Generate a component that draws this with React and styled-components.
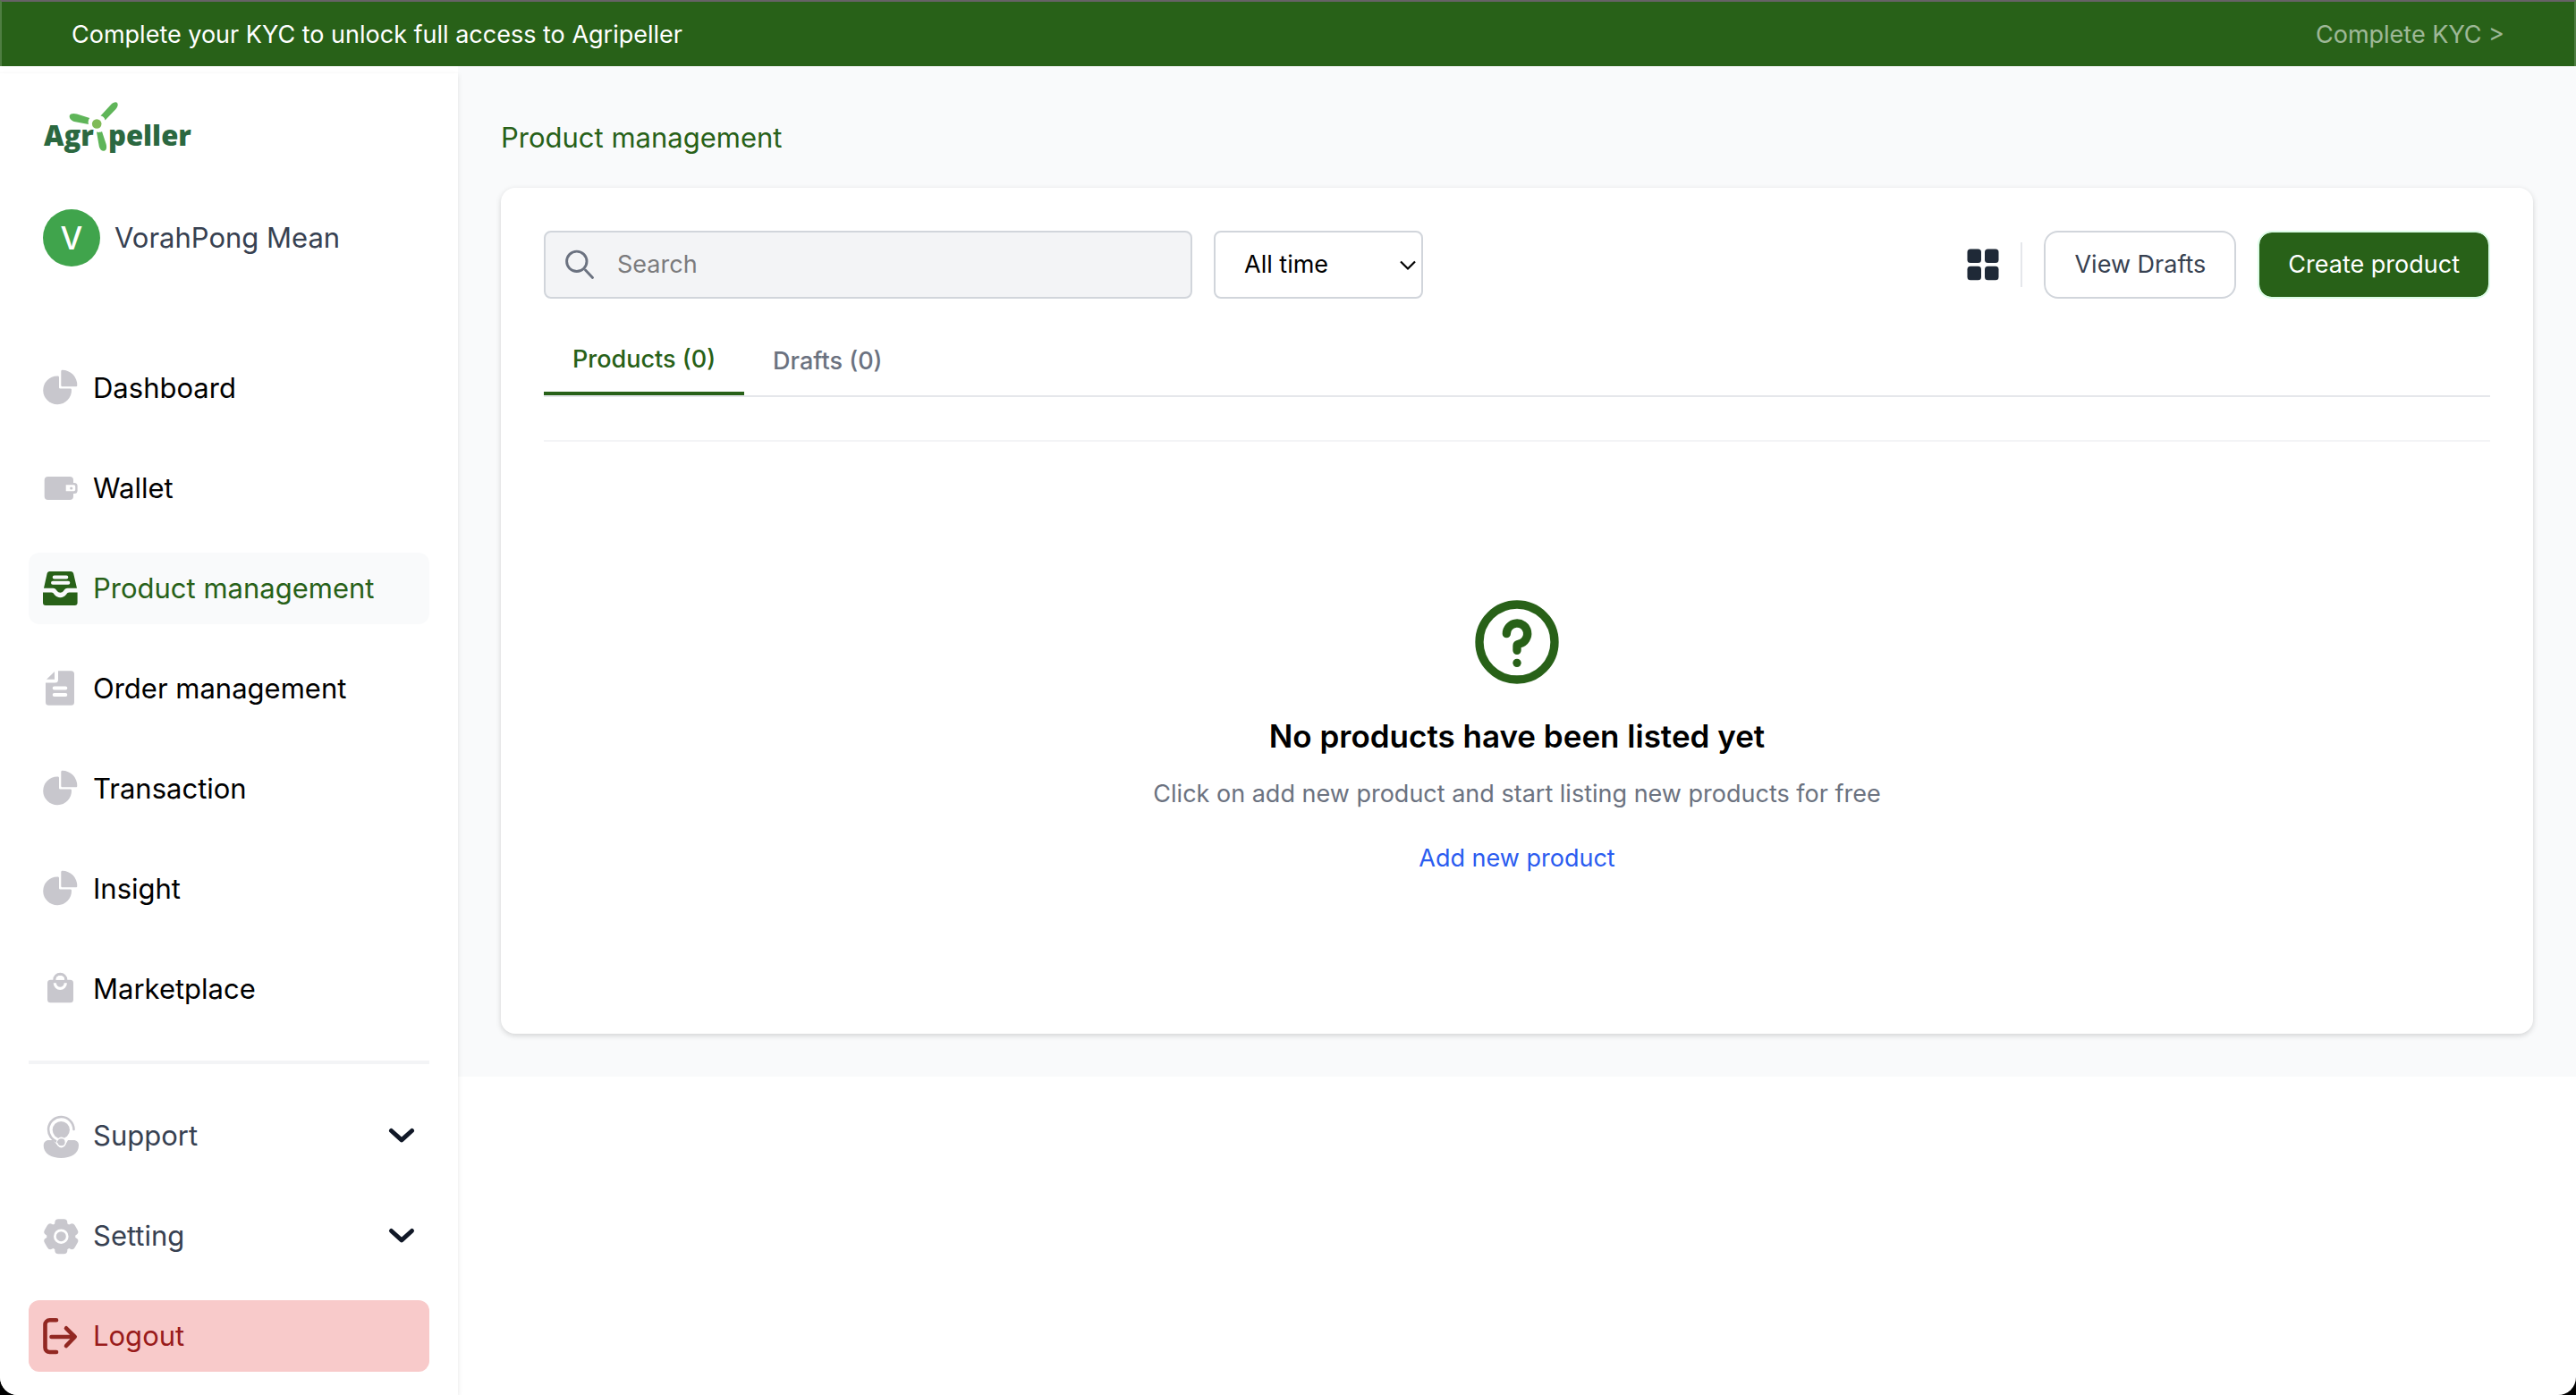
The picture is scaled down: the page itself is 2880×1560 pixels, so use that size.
import React from 'react';
import styled, { createGlobalStyle, css } from 'styled-components';

const GREEN = '#286118';
const MUTED = '#c8c7cd';

const GlobalStyle = createGlobalStyle`
  *, *::before, *::after { box-sizing: border-box; }
  body {
    margin: 0;
    background: #000;
    color: #000;
    font-family: Inter, "Liberation Sans", sans-serif;
    font-size: 27px;
    line-height: 40px;
  }
  h1, h2, p { margin: 0; }
  a { color: inherit; text-decoration: none; }
  button, input, select { font: inherit; color: inherit; margin: 0; }
  button { cursor: pointer; }
  svg { display: block; flex: none; overflow: visible; }
`;

const Shell = styled.div`
  display: flex;
  flex-direction: column;
  min-height: 100vh;
  background: #fff;
  border-radius: 0 0 20px 20px;
  overflow: hidden;
`;

const Banner = styled.header`
  display: flex;
  align-items: center;
  justify-content: space-between;
  padding: 17px 78px 15px;
  color: #fff;
  background: ${GREEN};
  border: 2px solid #4f7e42;
  border-top-color: #666266;
  border-bottom: 0;
`;

const BannerLink = styled.a`
  opacity: 0.55;
`;

const Body = styled.div`
  display: flex;
  flex: 1;
  align-items: stretch;
`;

const Sidebar = styled.aside`
  position: relative;
  z-index: 1;
  display: flex;
  flex: none;
  flex-direction: column;
  width: 512px;
  margin-top: 8px;
  padding: 28px 32px 24px;
  background: #fff;
  box-shadow: 0 2px 6px rgba(0, 0, 0, 0.1);
`;

const LogoLink = styled.a`
  display: block;
  width: 184px;
  margin-left: 16px;
`;

const Profile = styled.div`
  display: flex;
  align-items: center;
  gap: 16px;
  margin-top: 60px;
  padding: 0 16px;
  font-size: 31px;
  color: #374151;
`;

const Avatar = styled.span`
  display: grid;
  place-items: center;
  width: 64px;
  height: 64px;
  border-radius: 50%;
  background: #40a44c;
  color: #fff;
  font-size: 35px;
  font-weight: 500;
`;

const NavList = styled.nav`
  display: flex;
  flex-direction: column;
  gap: 32px;
  ${(p) => p.$main && css`
    margin-top: 96px;
    padding-bottom: 40px;
    margin-bottom: 40px;
    border-bottom: 4px solid #f3f4f6;
  `}
`;

const tones = {
  plain: css`color: #000; background: transparent;`,
  soft: css`color: #374151; background: transparent;`,
  active: css`color: ${GREEN}; background: #f9fafb;`,
  danger: css`color: #991b1b; background: #f8caca;`,
};

const navItem = css`
  display: flex;
  align-items: center;
  gap: 16px;
  width: 100%;
  height: 80px;
  padding: 0 16px;
  border: 0;
  border-radius: 12px;
  font-size: 31px;
  text-align: left;
  ${(p) => tones[p.$tone || 'plain']}
`;
const NavLink = styled.a`${navItem}`;
const NavButton = styled.button`${navItem}`;
const NavLabel = styled.span`
  flex: 1;
`;

const Main = styled.main`
  flex: 1;
  min-width: 0;
  align-self: flex-start;
  padding: 48px;
  background: #f9fafb;
`;

const PageTitle = styled.h1`
  margin-bottom: 24px;
  font-size: 31px;
  font-weight: 400;
  line-height: 64px;
  color: ${GREEN};
`;

const Card = styled.section`
  padding: 48px;
  background: #fff;
  border-radius: 16px;
  box-shadow: 0 2px 6px rgba(0, 0, 0, 0.16);
`;

const Toolbar = styled.div`
  display: flex;
  align-items: center;
  justify-content: space-between;
  gap: 24px;
`;

const Group = styled.div`
  display: flex;
  align-items: center;
  gap: 24px;
`;

const SearchBox = styled.label`
  display: flex;
  align-items: center;
  gap: 26px;
  width: 725px;
  height: 76px;
  padding: 0 22px;
  color: #6b7280;
  background: #f3f4f6;
  border: 2px solid #d1d5db;
  border-radius: 8px;
`;

const SearchInput = styled.input`
  flex: 1;
  min-width: 0;
  padding: 0;
  border: 0;
  outline: 0;
  background: transparent;
  &::placeholder { color: #7b7b7d; opacity: 1; }
`;

const SelectWrap = styled.div`
  position: relative;
  width: 234px;
`;

const Select = styled.select`
  appearance: none;
  width: 100%;
  height: 76px;
  padding: 0 32px;
  color: #000;
  background: #fff;
  border: 2px solid #d1d5db;
  border-radius: 8px;
`;

const SelectArrow = styled.svg`
  position: absolute;
  top: 32px;
  right: 7px;
  pointer-events: none;
`;

const IconButton = styled.button`
  padding: 0;
  border: 0;
  background: none;
`;

const Divider = styled.span`
  width: 2px;
  height: 50px;
  background: #e5e7eb;
`;

const Button = styled.button`
  height: 76px;
  padding: 0 32px;
  border: 2px solid ${(p) => (p.$primary ? '#dcfce7' : '#d1d5db')};
  border-radius: 16px;
  color: ${(p) => (p.$primary ? '#fff' : '#374151')};
  background: ${(p) => (p.$primary ? GREEN : '#fff')};
  background-clip: padding-box;
  white-space: nowrap;
`;

const Tabs = styled.div`
  display: flex;
  margin-top: 32px;
  border-bottom: 2px solid #e5e7eb;
`;

const Tab = styled.button`
  height: 76px;
  padding: 0 32px;
  border: 0;
  border-bottom: ${(p) => (p.$active ? `4px solid ${GREEN}` : '0')};
  background: none;
  font-weight: 500;
  color: ${(p) => (p.$active ? GREEN : '#6b7280')};
`;

const EmptyState = styled.div`
  display: flex;
  flex-direction: column;
  align-items: center;
  margin-top: 48px;
  padding: 168px 0 126px;
  border-top: 2px solid #f3f4f6;
  line-height: 44px;
  text-align: center;
`;

const EmptyTitle = styled.h2`
  margin: 22px 0 16px;
  font-size: 35px;
  font-weight: 600;
  line-height: 54px;
`;

const EmptyText = styled.p`
  margin-bottom: 28px;
  color: #6b7280;
`;

const EmptyLink = styled.a`
  color: #2b5cf0;
`;

const LogoWord = styled.text`
  font-family: "Open Sans", "Noto Sans", sans-serif;
  font-size: 31px;
  font-weight: 800;
  fill: #2b6840;
`;

function Logo() {
  return (
    <svg width="184" height="64" viewBox="0 0 184 64" role="img" aria-label="Agripeller">
      <LogoWord x="1" y="53">Agr</LogoWord>
      <LogoWord x="73" y="53">peller</LogoWord>
      <g fill="#5fb559">
        <path d="M64.500 19.500 76 7c2.500-2.600 6-3.600 7.200-1.800 1.200 1.800.2 4.600-1.700 6.800L69.500 24.500C69 21.500 67 20 64.500 19.500Z" />
        <path d="M52.200 22 38 17.500c-3.500-1-7.400-.8-8.200 1.700-.7 2.600 1.600 5.600 5.200 6.700L51 29C50.200 26.500 50.800 24 52.200 22Z" />
        <path d="M60 37.500c1.500.7 4.500.5 6-.5l4.600 14c1 3.500.6 7-2 7.700-2.600.6-5-1.500-5.800-5Z" />
      </g>
      <circle cx="60.200" cy="28.500" r="5.300" fill="#80bb58" />
    </svg>
  );
}

function Icon({ children, color = MUTED }) {
  return <svg width="40" height="40" viewBox="0 0 40 40" fill={color} aria-hidden="true">{children}</svg>;
}

const PieIcon = () => (
  <Icon>
    <path d="M16 6.400A15.900 15.900 0 1 0 32 21.800c0-.8-.6-1.400-1.400-1.400H19.200a1.200 1.200 0 0 1-1.200-1.200V7.800c0-.8-.6-1.400-1.400-1.400Z" />
    <path d="M20.300 1.200c0-.8.6-1.400 1.400-1.400A16.700 16.700 0 0 1 38.300 16.900c0 .8-.6 1.400-1.400 1.400H21.700c-.8 0-1.400-.6-1.400-1.400Z" />
  </Icon>
);

const WalletIcon = () => (
  <Icon>
    <rect x="1.700" y="7" width="32.300" height="26" rx="4" />
    <rect x="24" y="14" width="14.600" height="12" rx="3.500" />
    <path fill="#fff" d="M25.700 16.300h8.800c1 0 1.700.7 1.700 1.700v3.600c0 1-.7 1.700-1.700 1.700h-8.800Z" />
    <circle cx="31.700" cy="20" r="1.600" />
  </Icon>
);

const InboxIcon = () => (
  <Icon color={GREEN}>
    <path d="M7.500 1H31.200c1.500 0 2.700 1 3 2.400L38 19.700H27.500c-2 0-3.200 1.200-4.400 3-1.700 2.600-5.700 2.600-7.400 0-1.200-1.800-2.400-3-4.400-3H1L4.600 3.400C4.900 2 6 1 7.500 1Z" />
    <path d="M0 24.600h9.500c1.500 0 2.200.8 3.200 2.200 3.200 4.600 10.200 4.600 13.400 0 1-1.400 1.700-2.200 3.200-2.200h9.300V36a3 3 0 0 1-3 3H3a3 3 0 0 1-3-3Z" />
    <path d="M12.700 7.400h13.600M11 13.700h17.300" stroke="#f9fafb" strokeWidth="4" strokeLinecap="round" />
  </Icon>
);

const DocumentIcon = () => (
  <Icon>
    <path d="M17 .2H31.500A3.500 3.500 0 0 1 35 3.700V35.200a3.500 3.500 0 0 1-3.500 3.500h-25A3.500 3.500 0 0 1 3 35.200V13.500H13.500A3.500 3.500 0 0 0 17 10Z" />
    <path d="M4 9.700 13 .9V9.700Z" />
    <path d="M12.700 19.500h12.600M12.700 27h12.600" stroke="#fff" strokeWidth="4" strokeLinecap="round" />
  </Icon>
);

const BagIcon = () => (
  <Icon>
    <rect x="5" y="9.700" width="29" height="25.600" rx="3.500" />
    <circle cx="19.300" cy="9.700" r="6.400" fill="none" stroke={MUTED} strokeWidth="3.200" />
    <path d="M14.500 9.700a4.800 4.800 0 0 1 9.600 0Z" fill="#fff" />
    <path d="M13.300 13.300a6 6 0 0 0 12 0" fill="none" stroke="#fff" strokeWidth="3.200" />
  </Icon>
);

const SupportIcon = () => (
  <Icon>
    <path d="M6.500 25H34C38 25 40 27.500 40 31c0 9-9 14-19.700 14S.7 40 .7 31C.7 27.500 3 25 6.500 25Z" />
    <path d="M10 23.500 17 31.500c2 2.500 5 2.500 7 0l5-8Z" fill="#fff" />
    <circle cx="20.300" cy="13.600" r="9.600" />
    <path d="M34.500 13a14.200 14.200 0 1 0-16.500 14.200" fill="none" stroke={MUTED} strokeWidth="2.600" strokeLinecap="round" />
    <circle cx="20.600" cy="27.200" r="5.600" fill="#fff" />
    <path d="M16 26.700 20 28" stroke={MUTED} strokeWidth="2.600" />
    <circle cx="20.600" cy="27.200" r="4" />
  </Icon>
);

const GearIcon = () => (
  <Icon>
    <circle cx="20.300" cy="20.700" r="16" />
    {[0, 60, 120].map((a) => (
      <rect key={a} x="13.300" y="1.200" width="14" height="39" rx="4" transform={`rotate(${a} 20.300 20.700)`} />
    ))}
    <circle cx="20.300" cy="20.700" r="6.900" fill="none" stroke="#fff" strokeWidth="2.800" />
  </Icon>
);

const LogoutIcon = () => (
  <Icon color="none">
    <g stroke="#922822" strokeWidth="4.600" strokeLinecap="round" strokeLinejoin="round">
      <path d="M15 2.300H7.500a5 5 0 0 0-5 5V33a5 5 0 0 0 5 5H15" />
      <path d="M9.500 21H35.500M26 11.300 35.700 21 26 31" />
    </g>
  </Icon>
);

const Chevron = () => (
  <svg width="30" height="30" viewBox="0 0 30 30" fill="none" aria-hidden="true">
    <path d="M3.500 9.500 15 19.800 26.500 9.500" stroke="#111827" strokeWidth="5" strokeLinecap="round" strokeLinejoin="round" />
  </svg>
);

const SearchIcon = () => (
  <svg width="32" height="32" viewBox="0 0 32 32" fill="none" stroke="currentColor" strokeWidth="2.900" strokeLinecap="round" aria-hidden="true">
    <circle cx="12.800" cy="12.300" r="11.200" />
    <path d="M22.500 22 30.500 30.500" />
  </svg>
);

const GridIcon = () => (
  <svg width="36" height="36" viewBox="0 0 36 36" fill="#1f2937" aria-hidden="true">
    {[[0.5, 0.5], [20, 0.5], [0.5, 19.800], [20, 19.800]].map(([x, y]) => (
      <rect key={`${x}-${y}`} x={x} y={y} width="15.500" height="15.500" rx="3.500" />
    ))}
  </svg>
);

const QuestionIcon = () => (
  <svg width="112" height="112" viewBox="0 0 24 24" fill="none" stroke={GREEN} strokeWidth="2" strokeLinecap="round" strokeLinejoin="round" aria-hidden="true">
    <circle cx="12" cy="12" r="9" />
    <path d="M9.500 10a2.500 2.500 0 1 1 3.200 2.400C12.300 12.500 12 12.500 12 12.900V14" />
    <circle cx="12" cy="17" r="1" fill={GREEN} stroke="none" />
  </svg>
);

const mainNav = [
  { label: 'Dashboard', icon: PieIcon },
  { label: 'Wallet', icon: WalletIcon },
  { label: 'Product management', icon: InboxIcon, tone: 'active' },
  { label: 'Order management', icon: DocumentIcon },
  { label: 'Transaction', icon: PieIcon },
  { label: 'Insight', icon: PieIcon },
  { label: 'Marketplace', icon: BagIcon },
];

const groups = [
  { label: 'Support', icon: SupportIcon },
  { label: 'Setting', icon: GearIcon },
];

export default function App() {
  const [tab, setTab] = React.useState('Products');
  return (
    <Shell>
      <GlobalStyle />
      <Banner>
        <span>Complete your KYC to unlock full access to Agripeller</span>
        <BannerLink href="#kyc">Complete KYC &gt;</BannerLink>
      </Banner>
      <Body>
        <Sidebar>
          <LogoLink href="#home"><Logo /></LogoLink>
          <Profile>
            <Avatar>V</Avatar>
            <span>VorahPong Mean</span>
          </Profile>
          <NavList $main aria-label="Main">
            {mainNav.map(({ label, icon: ItemIcon, tone }) => (
              <NavLink key={label} href={`#${label.toLowerCase().replace(' ', '-')}`} $tone={tone} aria-current={tone ? 'page' : undefined}>
                <ItemIcon />
                <NavLabel>{label}</NavLabel>
              </NavLink>
            ))}
          </NavList>
          <NavList aria-label="Account">
            {groups.map(({ label, icon: ItemIcon }) => (
              <NavButton key={label} type="button" $tone="soft" aria-expanded="false">
                <ItemIcon />
                <NavLabel>{label}</NavLabel>
                <Chevron />
              </NavButton>
            ))}
            <NavButton type="button" $tone="danger">
              <LogoutIcon />
              <NavLabel>Logout</NavLabel>
            </NavButton>
          </NavList>
        </Sidebar>
        <Main>
          <PageTitle>Product management</PageTitle>
          <Card>
            <Toolbar>
              <Group>
                <SearchBox>
                  <SearchIcon />
                  <SearchInput type="text" placeholder="Search" aria-label="Search" />
                </SearchBox>
                <SelectWrap>
                  <Select aria-label="Period" defaultValue="all">
                    <option value="all">All time</option>
                  </Select>
                  <SelectArrow width="20" height="14" viewBox="0 0 20 14" fill="none" aria-hidden="true">
                    <path d="M2 2.500 10 10.500 18 2.500" stroke="#000" strokeWidth="2.200" />
                  </SelectArrow>
                </SelectWrap>
              </Group>
              <Group>
                <IconButton type="button" aria-label="Grid view"><GridIcon /></IconButton>
                <Divider />
                <Button type="button">View Drafts</Button>
                <Button type="button" $primary>Create product</Button>
              </Group>
            </Toolbar>
            <Tabs role="tablist">
              {['Products', 'Drafts'].map((name) => (
                <Tab key={name} type="button" role="tab" aria-selected={tab === name} $active={tab === name} onClick={() => setTab(name)}>
                  {`${name} (0)`}
                </Tab>
              ))}
            </Tabs>
            <EmptyState>
              <QuestionIcon />
              <EmptyTitle>No products have been listed yet</EmptyTitle>
              <EmptyText>Click on add new product and start listing new products for free</EmptyText>
              <EmptyLink href="#new">Add new product</EmptyLink>
            </EmptyState>
          </Card>
        </Main>
      </Body>
    </Shell>
  );
}
